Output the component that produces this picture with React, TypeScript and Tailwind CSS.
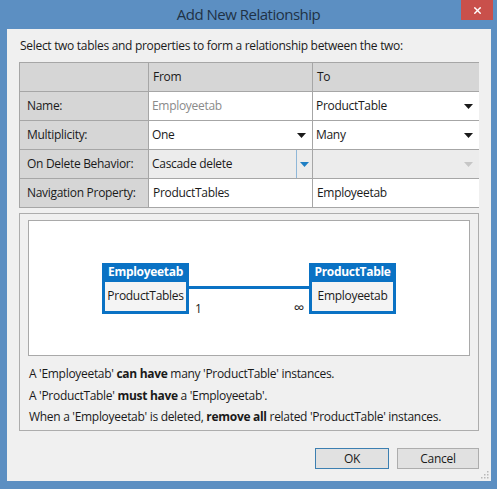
import { X } from 'lucide-react'

const font = { fontFamily: '"Open Sans", "Noto Sans", sans-serif' }

function Caret({ color = '#1a1a1a' }: { color?: string }) {
  return (
    <svg width="9" height="5" viewBox="0 0 9 5" className="shrink-0">
      <path d="M0 0h9L4.5 5z" fill={color} />
    </svg>
  )
}

function Cell({
  children,
  className = '',
}: {
  children?: React.ReactNode
  className?: string
}) {
  return <div className={`h-[28px] flex items-center ${className}`}>{children}</div>
}

function Select({ value }: { value: string }) {
  return (
    <Cell className="bg-white pl-[3px] pr-[6px] justify-between">
      <span>{value}</span>
      <Caret />
    </Cell>
  )
}

function EntityBox({ title, prop }: { title: string; prop: string }) {
  return (
    <div className="w-[87px] h-[51px] bg-[#0a72c4] px-[3px] pb-[3px] flex flex-col">
      <div className="h-[19px] flex items-center justify-center text-white font-bold text-[12px]">
        {title}
      </div>
      <div className="flex-1 bg-[#f4f4f4] flex items-center justify-center text-[12px] text-[#1a1a1a]">
        {prop}
      </div>
    </div>
  )
}

export default function App() {
  return (
    <div
      className="w-[497px] h-[489px] bg-[#5c8fc2] flex flex-col relative text-[12px] tracking-[-0.3px] text-[#1a1a1a]"
      style={font}
    >
      {/* Title bar */}
      <div className="h-[29px] flex items-center justify-center text-[15px] tracking-[-0.5px] text-[#1f3246]">
        Add New Relationship
      </div>
      <button className="absolute top-0 right-[4px] w-[32px] h-[20px] bg-[#c9504b] flex items-center justify-center text-white">
        <X size={11} strokeWidth={3} />
      </button>

      {/* Client area */}
      <div className="ml-[7px] mr-[6px] h-[452px] bg-[#f0f0f0] px-[12px] flex flex-col relative">
        <div className="h-[33px] flex items-center pl-px">
          Select two tables and properties to form a relationship between the two:
        </div>

        {/* Property grid */}
        <div className="bg-[#a6a6a6] p-px grid grid-cols-[128px_163px_166px] gap-px">
          <Cell className="bg-[#d6d6d6]" />
          <Cell className="bg-[#d6d6d6] pl-[4px]">From</Cell>
          <Cell className="bg-[#d6d6d6] pl-[4px]">To</Cell>

          <Cell className="bg-[#d6d6d6] pl-[7px]">Name:</Cell>
          <Cell className="bg-white pl-[3px] text-[#8a8a8a]">Employeetab</Cell>
          <Select value="ProductTable" />

          <Cell className="bg-[#d6d6d6] pl-[7px]">Multiplicity:</Cell>
          <Select value="One" />
          <Select value="Many" />

          <Cell className="bg-[#d6d6d6] pl-[7px]">On Delete Behavior:</Cell>
          <Cell className="bg-[#ececec] pl-[3px] justify-between">
            <span>Cascade delete</span>
            <div className="h-full w-[16px] border-l border-[#8fb7d8] flex items-center justify-center">
              <Caret color="#1f7fc4" />
            </div>
          </Cell>
          <Cell className="bg-[#ececec] pr-[6px] justify-end">
            <Caret color="#c6c6c6" />
          </Cell>

          <Cell className="bg-[#d6d6d6] pl-[7px]">Navigation Property:</Cell>
          <Cell className="bg-white pl-[4px]">ProductTables</Cell>
          <Cell className="bg-white pl-[4px]">Employeetab</Cell>
        </div>

        {/* Diagram and summary */}
        <div className="mt-[5px] h-[218px] border border-[#adadad] px-[8px] pt-[6px] flex flex-col">
          <div className="h-[136px] bg-white border border-[#a9a9a9] flex items-center justify-center">
            <div className="flex items-start">
              <EntityBox title="Employeetab" prop="ProductTables" />
              <div className="w-[120px] relative">
                <div className="mt-[23px] h-[3px] bg-[#0a72c4]" />
                <span className="absolute left-[6px] top-[37px]">1</span>
                <span className="absolute right-[5px] top-[35px] text-[15px] leading-[18px]">∞</span>
              </div>
              <EntityBox title="ProductTable" prop="Employeetab" />
            </div>
          </div>
          <div className="pl-px pt-[7px] flex flex-col">
            <p className="h-[22px] flex items-center">
              A 'Employeetab'&nbsp;<b>can have</b>&nbsp;many 'ProductTable' instances.
            </p>
            <p className="h-[21px] flex items-center">
              A 'ProductTable'&nbsp;<b>must have</b>&nbsp;a 'Employeetab'.
            </p>
            <p className="h-[21px] flex items-center">
              When a 'Employeetab' is deleted,&nbsp;<b>remove all</b>&nbsp;related 'ProductTable' instances.
            </p>
          </div>
        </div>

        {/* Buttons */}
        <div className="mt-[17px] flex justify-end gap-[8px]">
          <button className="w-[74px] h-[21px] bg-[#e1e1e1] border border-[#3c7fb1] text-[12px]">
            OK
          </button>
          <button className="w-[82px] h-[21px] bg-[#e1e1e1] border border-[#adadad] text-[12px]">
            Cancel
          </button>
        </div>

        {/* Resize grip */}
        <svg width="10" height="10" viewBox="0 0 10 10" className="absolute right-[2px] bottom-[2px]">
          {[
            [8, 2], [8, 5], [5, 5], [8, 8], [5, 8], [2, 8],
          ].map(([x, y]) => (
            <rect key={`${x}-${y}`} x={x} y={y} width="1.5" height="1.5" fill="#b8b8b8" />
          ))}
        </svg>
      </div>
    </div>
  )
}
